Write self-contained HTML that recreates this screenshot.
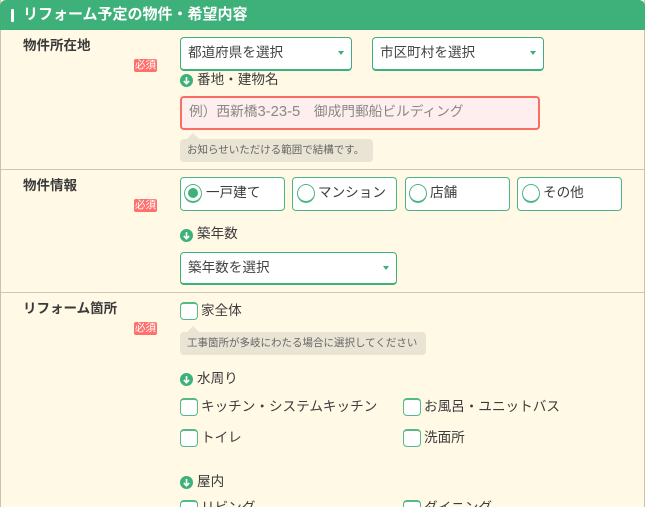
<!DOCTYPE html>
<html lang="ja"><head><meta charset="utf-8">
<style>
html,body{margin:0;padding:0;width:645px;height:507px;overflow:hidden;background:#fff}
body{position:relative;font-family:"Liberation Sans","WenQuanYi Zen Hei","Noto Sans CJK JP",sans-serif;color:#333;font-size:14px}
div{position:absolute;box-sizing:border-box;white-space:nowrap}
#wrap{left:0;top:0;width:645px;height:507px;background:#fff9e6;border-left:1px solid #c9c2ae;border-right:1px solid #c9c2ae;overflow:hidden}
#head{left:0;top:0;width:645px;height:30px;background:#3eb079;border-radius:6px 6px 0 0}
.hr{left:1px;width:643px;height:1px;background:#cfc7b3}
.th{left:23px;margin-top:1px;font-weight:bold;font-size:13.5px;line-height:20px;color:#3a3a3a}
.req{left:134px;width:23px;height:13px;background:#ff6f6b;border-radius:2px;color:#fff;font-size:10.5px;line-height:13px;text-align:center}
.sel{background:#fff;border:1px solid #3eb079;border-bottom-width:2px;border-radius:4px;height:34px;line-height:30px;padding-left:7px;font-size:13.6px;color:#444}
.sel:after{content:"";position:absolute;right:7px;top:13px;border-left:3px solid transparent;border-right:3px solid transparent;border-top:4px solid #3eb079}
.t{margin-top:1px;font-size:13.6px;line-height:20px;color:#3c3c3c}
.ar{width:13px;height:13px;border-radius:50%;background:#3eb079}
.ar svg{position:absolute;left:0;top:0}
.tip{background:#e9e4d4;border-radius:4px;height:23px;line-height:23px;padding-left:7px;font-size:10.500px;color:#666}
.tip:before{content:"";position:absolute;left:7px;top:-6px;border-left:6px solid transparent;border-right:6px solid transparent;border-bottom:6px solid #e9e4d4}
.rb{top:177px;height:34px;width:105px;background:#fff;border:1px solid #4db585;border-radius:4px}
.rd{top:184px;width:18px;height:19px;border-radius:50%;background:#fff;border:1px solid #4db585;border-bottom-width:2px}
.ck{width:18px;height:18px;background:#fff;border:1px solid #55b98a;border-top-width:2px;border-radius:4px}
</style></head><body>
<div id="wrap"></div>
<div id="head"></div>
<div style="left:11px;top:9px;width:3px;height:13px;background:#fff;border-radius:1px"></div>
<div style="left:23px;top:5px;font-size:15px;font-weight:bold;line-height:20px;color:#fff">リフォーム予定の物件・希望内容</div>

<div class="th" style="top:35px">物件所在地</div>
<div class="req" style="top:59px">必須</div>
<div class="sel" style="left:180px;top:37px;width:172px">都道府県を選択</div>
<div class="sel" style="left:372px;top:37px;width:172px">市区町村を選択</div>
<div class="ar" style="left:180px;top:74px"><svg width="13" height="13" viewBox="0 0 13 13"><path d="M6.500 3v6.500M3.800 7l2.700 2.700L9.200 7" fill="none" stroke="#fff" stroke-width="1.600"/></svg></div>
<div class="t" style="left:197px;top:69px">番地・建物名</div>
<div style="left:180px;top:96px;width:360px;height:34px;background:#ffeeee;border:2px solid #fb6d62;border-radius:4px;padding-left:7px;line-height:28px;font-size:13.7px;color:#888">例）西新橋<span style="font-size:14.800px">3-23-5</span>　御成門郵船ビルディング</div>
<div class="tip" style="left:180px;top:139px;width:193px">お知らせいただける範囲で結構です。</div>
<div class="hr" style="top:169px"></div>

<div class="th" style="top:175px">物件情報</div>
<div class="req" style="top:199px">必須</div>
<div class="rb" style="left:180px"></div>
<div class="rb" style="left:292px"></div>
<div class="rb" style="left:405px"></div>
<div class="rb" style="left:517px"></div>
<div class="rd" style="left:184px"></div>
<div style="left:188px;top:188px;width:10px;height:10px;border-radius:50%;background:#3eb079"></div>
<div class="t" style="left:206px;top:182px">一戸建て</div>
<div class="rd" style="left:297px"></div>
<div class="t" style="left:318px;top:182px">マンション</div>
<div class="rd" style="left:409px"></div>
<div class="t" style="left:430px;top:182px">店舗</div>
<div class="rd" style="left:522px"></div>
<div class="t" style="left:543px;top:182px">その他</div>
<div class="ar" style="left:180px;top:229px"><svg width="13" height="13" viewBox="0 0 13 13"><path d="M6.500 3v6.500M3.800 7l2.700 2.700L9.200 7" fill="none" stroke="#fff" stroke-width="1.600"/></svg></div>
<div class="t" style="left:197px;top:223px">築年数</div>
<div class="sel" style="left:180px;top:252px;width:217px;height:33px">築年数を選択</div>
<div class="hr" style="top:292px"></div>

<div class="th" style="top:298px">リフォーム箇所</div>
<div class="req" style="top:322px">必須</div>
<div class="ck" style="left:180px;top:302px"></div>
<div class="t" style="left:201px;top:300px">家全体</div>
<div class="tip" style="left:180px;top:332px;width:246px">工事箇所が多岐にわたる場合に選択してください</div>
<div class="ar" style="left:180px;top:373px"><svg width="13" height="13" viewBox="0 0 13 13"><path d="M6.500 3v6.500M3.800 7l2.700 2.700L9.200 7" fill="none" stroke="#fff" stroke-width="1.600"/></svg></div>
<div class="t" style="left:197px;top:368px">水周り</div>
<div class="ck" style="left:180px;top:398px"></div>
<div class="t" style="left:201px;top:396px">キッチン・システムキッチン</div>
<div class="ck" style="left:403px;top:398px"></div>
<div class="t" style="left:424px;top:396px">お風呂・ユニットバス</div>
<div class="ck" style="left:180px;top:429px"></div>
<div class="t" style="left:201px;top:427px">トイレ</div>
<div class="ck" style="left:403px;top:429px"></div>
<div class="t" style="left:424px;top:427px">洗面所</div>
<div class="ar" style="left:180px;top:476px"><svg width="13" height="13" viewBox="0 0 13 13"><path d="M6.500 3v6.500M3.800 7l2.700 2.700L9.200 7" fill="none" stroke="#fff" stroke-width="1.600"/></svg></div>
<div class="t" style="left:197px;top:471px">屋内</div>
<div class="ck" style="left:180px;top:500px"></div>
<div class="t" style="left:201px;top:497px">リビング</div>
<div class="ck" style="left:403px;top:500px"></div>
<div class="t" style="left:424px;top:497px">ダイニング</div>
</body></html>
